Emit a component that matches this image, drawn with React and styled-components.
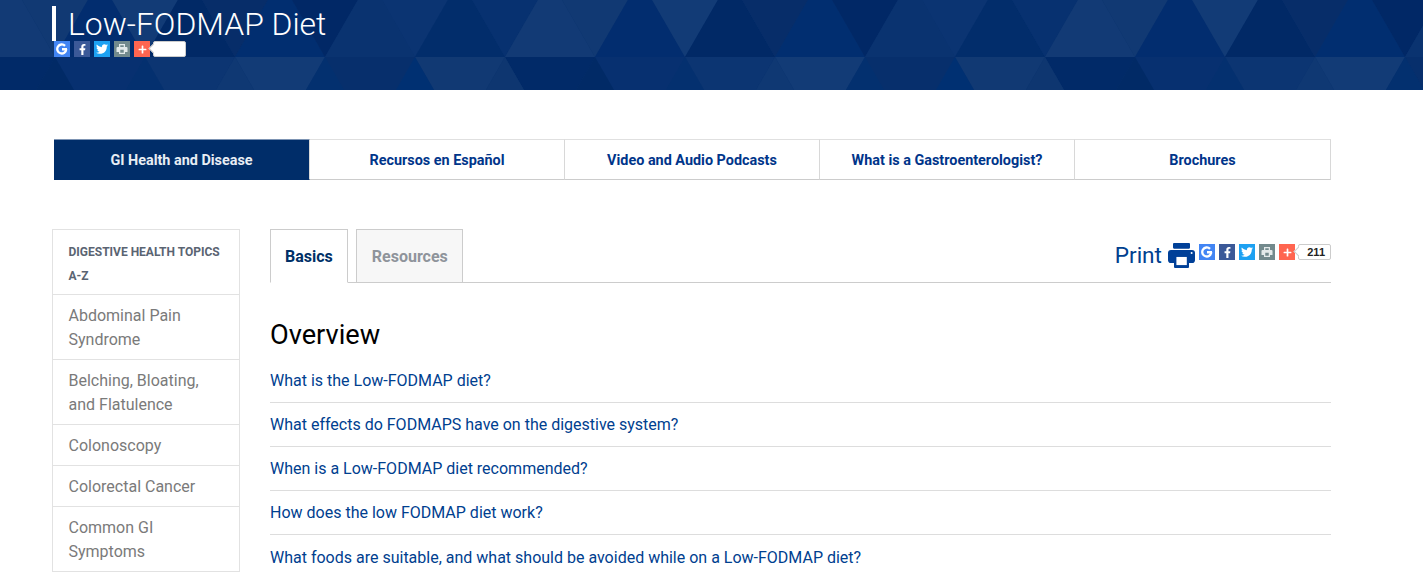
import React from "react";
import styled, { createGlobalStyle } from "styled-components";
import { FaFacebookF, FaTwitter, FaPlus } from "react-icons/fa";

const Global = createGlobalStyle`
  html, body { margin: 0; padding: 0; background: #fff; }
  body { font-family: Roboto, "Liberation Sans", sans-serif; height: 572px; overflow: hidden; }
  * { box-sizing: border-box; }
`;

const Header = styled.header`
  position: relative;
  height: 90px;
  background: #0a3370;
  overflow: hidden;
  padding: 6px 0 0 52px;
`;
const Pattern = styled.svg`
  position: absolute;
  left: 0;
  top: 0;
`;
const Title = styled.h1`
  position: relative;
  margin: 0;
  height: 35px;
  border-left: 4px solid #fff;
  padding-left: 12px;
  font-size: 31.9px;
  font-weight: 300;
  line-height: 36px;
  color: #fff;
`;
const ShareRow = styled.div`
  position: relative;
  display: flex;
  align-items: center;
  gap: 4px;
  margin-left: ${p => p.$inset || 0}px;
`;
const ShareTile = styled.span`
  width: 16px;
  height: 16px;
  display: flex;
  align-items: center;
  justify-content: center;
  background: ${p => p.$bg};
  color: #fff;
  font-size: ${p => p.$size || 11}px;
`;
const Count = styled.span`
  position: relative;
  width: 33px;
  height: 16px;
  margin-left: -1px;
  background: #fff;
  border: 1px solid #ccc;
  border-radius: 2px;
  font: bold 11px/14px "Liberation Sans", sans-serif;
  color: #222;
  text-align: right;
  padding-right: 5px;
  &::before {
    content: "";
    position: absolute;
    left: -4px;
    top: 3px;
    width: 6px;
    height: 6px;
    background: #fff;
    border-left: 1px solid #ccc;
    border-bottom: 1px solid #ccc;
    transform: rotate(45deg);
  }
`;

const Page = styled.div`
  padding: 49px 92px 0 52px;
`;
const Nav = styled.nav`
  display: grid;
  grid-template-columns: 256px 255px 255px 255px 1fr;
  height: 41px;
  margin-left: 2px;
`;
const NavItem = styled.a`
  display: flex;
  align-items: center;
  justify-content: center;
  padding-top: 1px;
  font-size: 14.4px;
  font-weight: 700;
  color: ${p => (p.$active ? "#e8edf4" : "#00358a")};
  background: ${p => (p.$active ? "#002d69" : "#fff")};
  border-top: 1px solid ${p => (p.$active ? "#7d94b3" : "#e0e0e0")};
  border-bottom: 1px solid ${p => (p.$active ? "#002d69" : "#ccc")};
  border-right: 1px solid #d8d8d8;
`;
const Columns = styled.div`
  display: flex;
  gap: 30px;
  margin-top: 49px;
`;
const Sidebar = styled.aside`
  flex: 0 0 188px;
  border: 1px solid #e2e2e2;
  height: 343px;
`;
const SideTitle = styled.div`
  padding: 10px 15.5px 6px;
  font-size: 12px;
  font-weight: 700;
  line-height: 24px;
  color: #5a6472;
  border-bottom: 1px solid #e2e2e2;
`;
const SideItem = styled.a`
  display: block;
  padding: 9px 15.5px 7px;
  font-size: 16px;
  line-height: 24px;
  color: #7a7a7a;
  border-bottom: 1px solid #e2e2e2;
  &:last-child { border-bottom: 0; }
`;
const Main = styled.main`
  flex: 1;
  min-width: 0;
`;
const TabBar = styled.div`
  display: flex;
  align-items: flex-start;
  gap: 8px;
  height: 54px;
  border-bottom: 1px solid #ccc;
`;
const Tab = styled.a`
  height: 54px;
  padding: 0 14px 0 ${p => (p.$active ? 14 : 15)}px;
  display: flex;
  align-items: center;
  font-size: 16px;
  font-weight: 700;
  color: ${p => (p.$active ? "#003067" : "#8f949b")};
  background: ${p => (p.$active ? "#fff" : "#f7f7f7")};
  border: 1px solid #ccc;
  border-bottom-color: ${p => (p.$active ? "#fff" : "#ccc")};
`;
const Tools = styled.div`
  margin-left: auto;
  display: flex;
  align-items: flex-start;
  padding-top: 15px;
`;
const PrintLink = styled.a`
  font-size: 22.6px;
  line-height: 24px;
  color: #00408f;
`;
const PrintGlyph = styled.svg`
  width: 27px;
  height: 25px;
  margin: -1px 4px 0 6px;
  flex: none;
`;
const Heading = styled.h2`
  margin: 37px 0 9px;
  font-size: 27.2px;
  font-weight: 400;
  line-height: 30px;
  color: #000;
`;
const QList = styled.ul`
  margin: 0;
  padding: 0;
  list-style: none;
`;
const QItem = styled.li`
  height: 44px;
  padding-top: 10px;
  font-size: 16px;
  line-height: 24px;
  color: #00408f;
  border-bottom: 1px solid #ddd;
  &:last-child { border-bottom: 0; padding-top: 11px; }
`;

const GoogleG = () => (
  <svg width="12" height="12" viewBox="0 0 24 24" fill="none" stroke="#fff" strokeWidth="4.6">
    <path d="M22 12.5H12M20.5 12.5A9 9 0 1 1 18 5.7" />
  </svg>
);
const TilePrinter = ({ bg }) => (
  <svg width="12" height="12" viewBox="0 0 24 24">
    <path d="M6 2h12v6h3a2 2 0 0 1 2 2v8h-5v4H6v-4H1v-8a2 2 0 0 1 2-2h3z" fill="#e4eaea" />
    <path d="M8.5 4.5h7V8h-7zM8.5 13.5h7v6h-7z" fill={bg} />
  </svg>
);

const tiles = [
  { bg: "#4285f4", icon: <GoogleG /> },
  { bg: "#3b5998", icon: <FaFacebookF />, size: 11 },
  { bg: "#1da1f2", icon: <FaTwitter />, size: 12 },
  { bg: "#738a8d", icon: <TilePrinter bg="#738a8d" /> },
  { bg: "#ff6550", icon: <FaPlus />, size: 9 },
];

const upperUp = ["#022d6f", "#012966", "#012e70", "#0a3370", "#022d6b", "#123a75"];
const upperDown = ["#113973", "#123b76", "#072d69", "#012866", "#0b3472", "#073170"];
const lowerDown = ["#073070", "#0c3572", "#123b76", "#072f6c", "#113973", "#012a68"];
const lowerUp = ["#012a66", "#04306f", "#0f3873", "#03306f", "#003072", "#0e3670"];

const triangles = [];
for (let k = -1; k < 16; k++) {
  const v = 55 + 90 * k;
  const i = ((k % 6) + 6) % 6;
  triangles.push(
    [`${v - 45},-21 ${v + 45},-21 ${v},57`, upperDown[i]],
    [`${v},57 ${v + 90},57 ${v + 45},-21`, upperUp[i]],
    [`${v},57 ${v + 90},57 ${v + 45},135`, lowerDown[i]],
    [`${v},57 ${v - 45},135 ${v + 45},135`, lowerUp[i]]
  );
}

const ShareIcons = () =>
  tiles.map((t, i) => (
    <ShareTile key={i} $bg={t.bg} $size={t.size}>
      {t.icon}
    </ShareTile>
  ));

const nav = ["GI Health and Disease", "Recursos en Español", "Video and Audio Podcasts", "What is a Gastroenterologist?", "Brochures"];
const side = ["Abdominal Pain Syndrome", "Belching, Bloating, and Flatulence", "Colonoscopy", "Colorectal Cancer", "Common GI Symptoms"];
const questions = [
  "What is the Low-FODMAP diet?",
  "What effects do FODMAPS have on the digestive system?",
  "When is a Low-FODMAP diet recommended?",
  "How does the low FODMAP diet work?",
  "What foods are suitable, and what should be avoided while on a Low-FODMAP diet?",
];

export default function App() {
  return (
    <>
      <Global />
      <Header>
        <Pattern width="1423" height="90" viewBox="0 0 1423 90">
          {triangles.map(([points, fill], i) => (
            <polygon key={i} points={points} fill={fill} />
          ))}
        </Pattern>
        <Title>Low-FODMAP Diet</Title>
        <ShareRow $inset={2}>
          <ShareIcons />
          <Count />
        </ShareRow>
      </Header>
      <Page>
        <Nav>
          {nav.map((n, i) => (
            <NavItem key={n} $active={i === 0}>{n}</NavItem>
          ))}
        </Nav>
        <Columns>
          <Sidebar>
            <SideTitle>DIGESTIVE HEALTH TOPICS A-Z</SideTitle>
            {side.map(s => (
              <SideItem key={s}>{s}</SideItem>
            ))}
          </Sidebar>
          <Main>
            <TabBar>
              <Tab $active>Basics</Tab>
              <Tab>Resources</Tab>
              <Tools>
                <PrintLink>Print</PrintLink>
                <PrintGlyph viewBox="0 0 27 24" preserveAspectRatio="none" aria-hidden="true">
                  <rect x="5" y="0" width="17" height="5.4" rx="1" fill="#004098" />
                  <rect x="0" y="6.7" width="27" height="12.6" rx="3" fill="#004098" />
                  <rect x="6" y="12" width="15" height="12" rx="1" fill="#004098" />
                  <rect x="8.4" y="13.4" width="10.4" height="7.8" fill="#fff" />
                  <circle cx="23.6" cy="9.6" r="1" fill="#fff" />
                </PrintGlyph>
                <ShareRow>
                  <ShareIcons />
                  <Count>211</Count>
                </ShareRow>
              </Tools>
            </TabBar>
            <Heading>Overview</Heading>
            <QList>
              {questions.map(q => (
                <QItem key={q}>{q}</QItem>
              ))}
            </QList>
          </Main>
        </Columns>
      </Page>
    </>
  );
}
